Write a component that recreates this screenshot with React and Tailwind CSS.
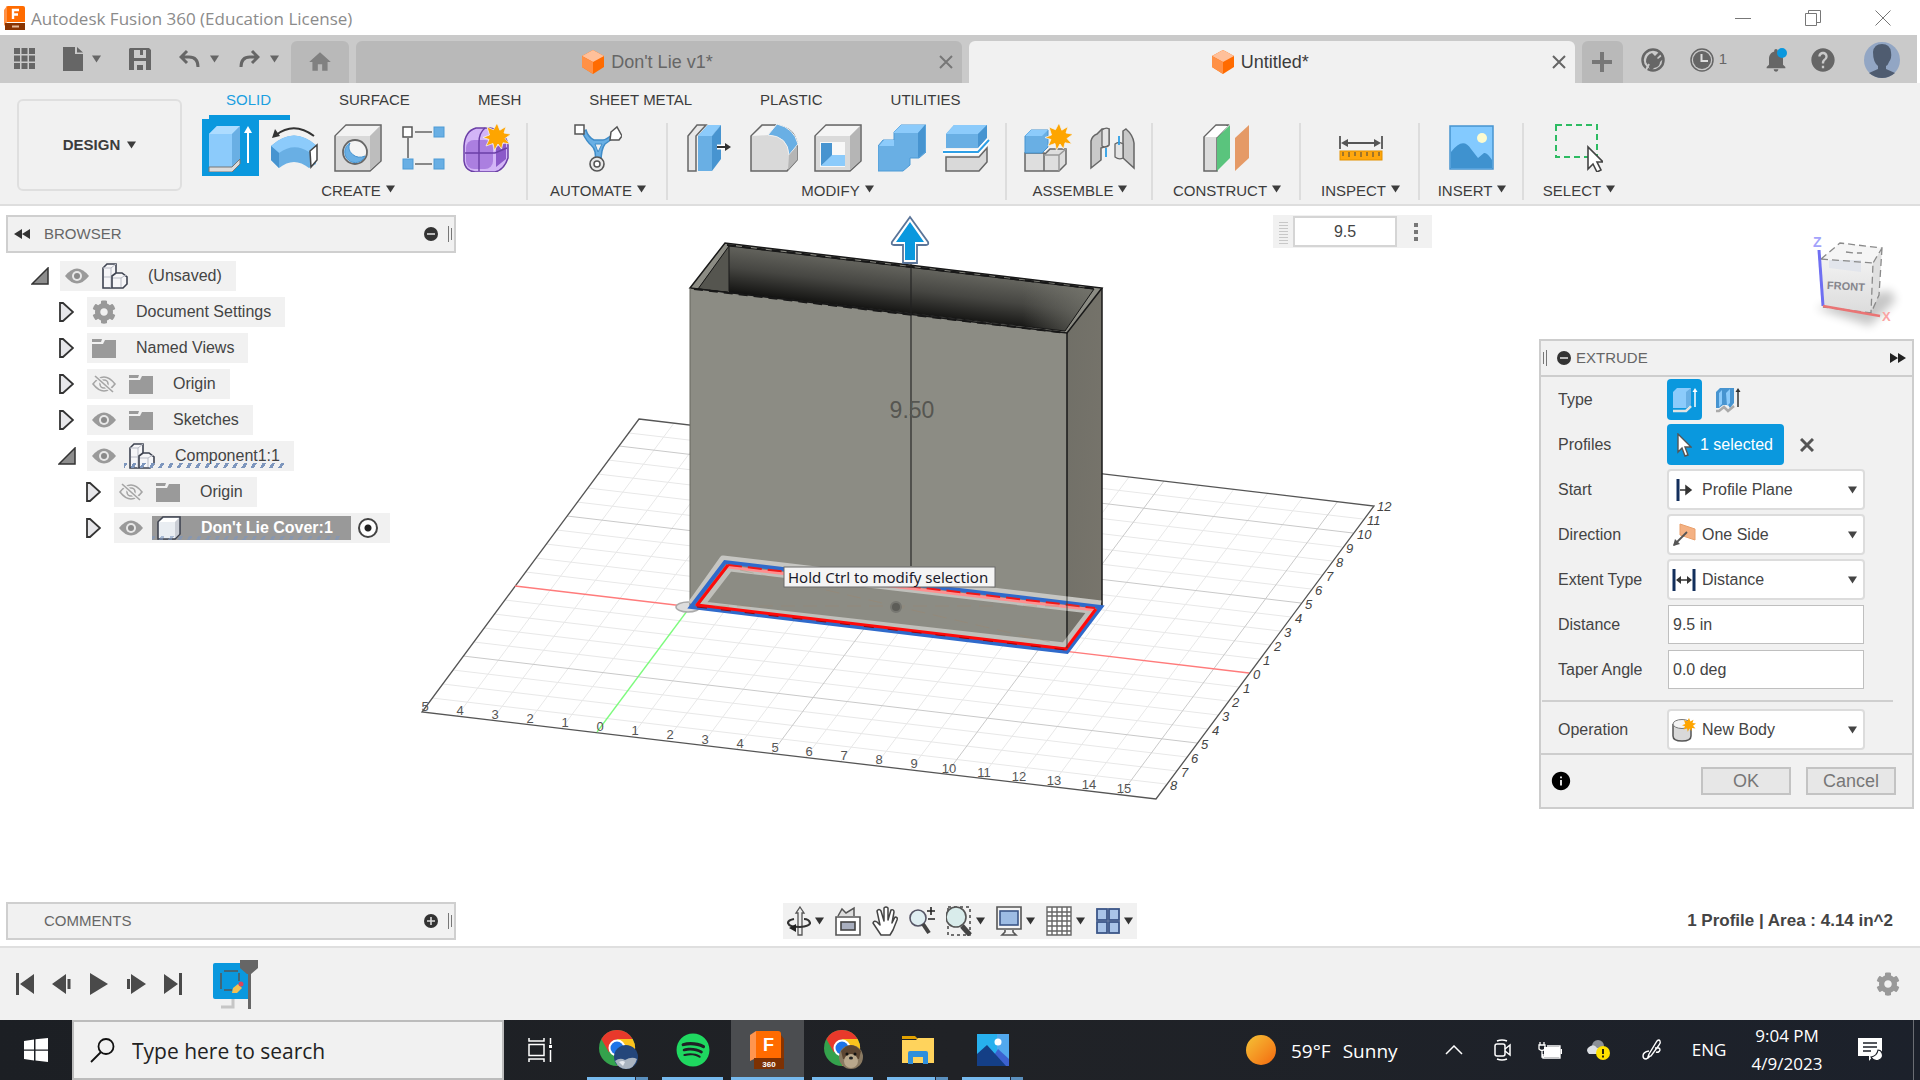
import React from "react";
import { FaCog, FaSpotify } from "react-icons/fa";
import { MdHelp, MdNotifications, MdHome, MdInfo } from "react-icons/md";

const ARIAL = "font-['Liberation_Sans',Arial,sans-serif]";
const SEGOE = "font-['Open_Sans','Noto_Sans',sans-serif]";

function Caret({ className = "" }) {
  return (
    <svg viewBox="0 0 9 8" className={`h-2 w-[9px] shrink-0 ${className}`} fill="currentColor" aria-hidden="true">
      <path d="M0 .5h9L4.500 7.500z" />
    </svg>
  );
}

function Svg({ w = 48, h = 48, children, className = "" }) {
  return (
    <svg width={w} height={h} viewBox={`0 0 ${w} ${h}`} fill="none" className={`shrink-0 ${className}`} aria-hidden="true">
      {children}
    </svg>
  );
}

const STAR = "M0-14l2.800 7.200L9-10.500 7-4l7 1.200L8 1.500l5 5.500-7-1.200L4.500 12 1 7l-3.500 6.500L-4 6.500l-7 2.500 3-6.500-6-2 6.500-2.500L-10-10l6.500 2.700z";

/* ---------- ribbon icons ---------- */

const ExtrudeIcon = () => (
  <Svg>
    <path d="M3 10l8-8h23v34l-8 7H3z" fill="#8ccbfb" />
    <path d="M3 10l8-8h23l-8 8z" fill="#addcff" />
    <path d="M26 10l8-8v34l-8 7z" fill="#69afe4" />
    <path d="M3 43h23l8-8v5l-8 8H3z" fill="#dcdcdc" stroke="#777" strokeWidth="1" />
    <path d="M42 39V8" stroke="#fff" strokeWidth="2" />
    <path d="M38 9l4-7 4 7z" fill="#fff" />
  </Svg>
);
const RevolveIcon = () => (
  <Svg>
    <path d="M1 22Q24 1 47 22l-1 18-7 4Q24 32 9 44L1 36z" fill="#69afe4" />
    <path d="M1 22Q24 1 47 22l-8 6Q24 18 9 29z" fill="#8ccbfb" />
    <path d="M1 22l8 7v15l-8-8z" fill="#4794d0" />
    <path d="M40 27l7-6v15l-6 7z" fill="#fff" stroke="#444" strokeWidth="1.500" />
    <path d="M6 11Q24-3 44 12" stroke="#333" strokeWidth="2" />
    <path d="M2 14l3-9 5 7z" fill="#333" />
  </Svg>
);
const HoleIcon = () => (
  <Svg>
    <path d="M1 12L12 1h35v36L36 47H1z" fill="#d9d9d9" stroke="#666" strokeWidth="1.500" />
    <path d="M2 12L12 2h34L36 12z" fill="#f3f3f3" />
    <path d="M36 12L46 2v35L36 46z" fill="#bdbdbd" />
    <circle cx="21" cy="28" r="12" fill="#f4f4f4" stroke="#666" strokeWidth="1.800" />
    <path d="M16 19a11 10 0 0 0 15 13 10.500 10.500 0 1 1-15-13z" fill="#69afe4" stroke="#4794d0" />
  </Svg>
);
const PatternIcon = () => (
  <Svg>
    <path d="M17 8h17M10 14v20M17 40h17" stroke="#666" strokeWidth="1.600" />
    <rect x="5" y="3" width="9" height="10" fill="#fff" stroke="#555" strokeWidth="1.500" />
    <g fill="#69afe4" stroke="#4f9bd6">
      <rect x="36" y="3" width="10" height="10" />
      <rect x="5" y="35" width="10" height="10" />
      <rect x="36" y="35" width="10" height="10" />
    </g>
  </Svg>
);
const FormIcon = () => (
  <Svg>
    <path d="M2 22Q3 7 14 4h14q14 2 18 16v14Q42 46 33 48H13Q3 47 2 37z" fill="#d3b5f7" stroke="#6b3fa6" strokeWidth="1.500" />
    <rect x="4" y="16" width="27" height="29" rx="8" fill="#ab7fe0" />
    <path d="M34 23l10-4v16l-10 8z" fill="#8b59c9" />
    <path d="M3 29h30l12-5M17 47V18q0-9 6-14" stroke="#6b3fa6" strokeWidth="1.400" />
    <path d={STAR} transform="translate(35 13)" fill="#fea500" stroke="#f1f1f1" strokeWidth=".8" />
  </Svg>
);
const AutomateIcon = () => (
  <Svg>
    <path d="M8 8q5 10 9 13 6 5 4 17h6q0-13 4-18 4-3 10-7l-2-3q-7 6-10 6h-9Q14 13 12 6z" fill="#69afe4" stroke="#3f8cc8" strokeWidth="1.500" />
    <path d="M21 20h7l-4 8z" fill="#f1f1f1" stroke="#3f8cc8" />
    <rect x="1" y="1" width="9" height="9" fill="#fff" stroke="#555" strokeWidth="1.500" />
    <path d="M37 8l6-5 5 9-3 4h-9z" fill="#fff" stroke="#555" strokeWidth="1.500" />
    <circle cx="23" cy="40" r="7" fill="#e8e8e8" stroke="#555" strokeWidth="1.600" />
    <circle cx="23" cy="40" r="3" fill="#fff" stroke="#555" strokeWidth="1.500" />
  </Svg>
);
const PressPullIcon = () => (
  <Svg>
    <path d="M2 12L11 1h9L10 12v35H2z" fill="#e8e8e8" stroke="#666" strokeWidth="1.500" />
    <path d="M12 12L22 1h13L26 12v35H12z" fill="#69afe4" />
    <path d="M12 12L22 1h13L26 12z" fill="#8ccbfb" />
    <path d="M26 12l9-11v34l-9 12z" fill="#4794d0" />
    <path d="M31 23h10" stroke="#fff" strokeWidth="5" />
    <path d="M31 23h10" stroke="#333" strokeWidth="2" />
    <path d="M39 19l6 4-6 4z" fill="#333" />
  </Svg>
);
const FilletIcon = () => (
  <Svg>
    <path d="M1 12L12 1h14Q45 4 47 20v16L37 47H1z" fill="#d9d9d9" stroke="#666" strokeWidth="1.500" />
    <path d="M2 12L13 2h13l-8 9z" fill="#f5f5f5" />
    <path d="M18 11l9-11Q44 4 48 20l-9 11Q38 12 18 11z" fill="#69afe4" stroke="#f1f1f1" />
    <path d="M39 31l8-9v14l-9 10z" fill="#b5b5b5" />
  </Svg>
);
const ShellIcon = () => (
  <Svg>
    <path d="M1 12L12 1h35v36L36 47H1z" fill="#dadada" stroke="#666" strokeWidth="1.500" />
    <path d="M2 12L12 2h34L36 12z" fill="#f5f5f5" />
    <path d="M36 12L46 2v35L36 46z" fill="#b5b5b5" />
    <rect x="6" y="18" width="25" height="25" fill="#f8f8f8" />
    <path d="M7 19h11v13L7 42z" fill="#4794d0" />
    <path d="M18 31h13v11H7z" fill="#8ccbfb" />
  </Svg>
);
const CombineIcon = () => (
  <Svg>
    <path d="M0 22l5-6h11V8l7-7h25v27l-7 6h-9v7l-7 6H0z" fill="#69afe4" stroke="#4f9bd6" />
    <path d="M16 8l7-7h24l-7 8H16zM1 22l5-6h10v6z" fill="#8ccbfb" />
    <path d="M40 9l7-8v27l-7 6z" fill="#4794d0" />
  </Svg>
);
const SplitIcon = () => (
  <Svg>
    <path d="M4 10l8-9h33v12L36 24H4z" fill="#69afe4" />
    <path d="M4 10l8-9h33l-9 9z" fill="#8ccbfb" />
    <path d="M36 10l9-9v13l-9 10z" fill="#4794d0" />
    <path d="M1 28h35l11-12" stroke="#fff" strokeWidth="5" />
    <path d="M1 28h35l11-12" stroke="#2e9fe6" strokeWidth="2" />
    <path d="M4 33h33l8-9v14l-8 9H4z" fill="#d9d9d9" stroke="#666" strokeWidth="1.500" />
  </Svg>
);
const NewComponentIcon = () => (
  <Svg>
    <path d="M1 29h19v18H1zM20 31l6-6h16v15l-7 7H20z" fill="#dedede" stroke="#666" strokeWidth="1.500" />
    <path d="M20 31h15l7-6M35 31v16" stroke="#999" strokeWidth="1.500" />
    <path d="M1 12l6-6h17v17l-6 6H1z" fill="#69afe4" stroke="#4794d0" />
    <path d="M1 12l6-6h17l-6 6z" fill="#8ccbfb" />
    <path d={STAR} transform="translate(35 13)" fill="#fea500" stroke="#f1f1f1" strokeWidth=".8" />
  </Svg>
);
const JointIcon = () => (
  <Svg>
    <path d="M3 17q1-5 6-7l5-5h7v15q0 3-5 3l-3 1v12L3 44z" fill="#c9c9c9" stroke="#666" strokeWidth="1.500" />
    <path d="M14 6v16q3 2 7-1V5q-3-2-7 1z" fill="#e4e4e4" stroke="#666" strokeWidth="1.300" />
    <path d="M35 7l3-2q7 6 8 14v25l-11-10z" fill="#c9c9c9" stroke="#666" strokeWidth="1.500" />
    <path d="M27 20v13q4 3 8 1V20q-4-3-8 0z" fill="#e4e4e4" stroke="#666" strokeWidth="1.300" />
    <path d="M18 24v9M31 12v9" stroke="#2e9fe6" strokeWidth="1.800" />
  </Svg>
);
const PlaneIcon = () => (
  <Svg>
    <path d="M1 13L13 1h12L14 14v33H1z" fill="#dcdcdc" stroke="#666" strokeWidth="1.500" />
    <path d="M2 13L13 2h12L14 13z" fill="#fff" />
    <path d="M14 14L27 1v33L14 47z" fill="#5ac47d" />
    <path d="M32 14L46 1v33L32 47z" fill="#e59a66" />
  </Svg>
);
const MeasureIcon = () => (
  <Svg>
    <path d="M3 12v13M45 12v13M6 19h36" stroke="#555" strokeWidth="1.800" />
    <path d="M4 19l7-4v8zM44 19l-7-4v8z" fill="#555" />
    <rect x="3" y="27" width="42" height="9" fill="#ffa70d" stroke="#e39100" />
    <path d="M6 28v4M12 28v5M18 28v4M24 28v5M30 28v4M36 28v5M42 28v4" stroke="#444" />
  </Svg>
);
const CanvasIcon = () => (
  <Svg>
    <rect x="2" y="2" width="43" height="43" fill="#83caff" stroke="#4794d0" strokeWidth="1.500" />
    <circle cx="34" cy="14" r="5" fill="#fbfbd0" />
    <path d="M3 28q12-16 20-3l7 9 6-5q3-1 8 7v8H3z" fill="#3f92cf" />
  </Svg>
);
const SelectIcon = () => (
  <Svg>
    <rect x="1" y="1" width="41" height="32" stroke="#2dbb62" strokeWidth="2" strokeDasharray="6 4" />
    <path d="M33 23v22l5-5 4 8 4-2-4-8h6z" fill="#fff" stroke="#444" strokeWidth="1.600" />
  </Svg>
);

/* ---------- title and tab bar ---------- */

function FusionMark() {
  return (
    <svg width="22" height="24" viewBox="0 0 22 24" aria-hidden="true">
      <path d="M2 2q0-2 2-2h15q2 0 2 2v14H2z" fill="#ff6b00" />
      <path d="M0 4l3-4v16L0 20z" fill="#ff9146" />
      <path d="M1 17h20v7H1z" fill="#8a3400" />
      <path d="M9 13V4h6M9 8.500h5" stroke="#fff" strokeWidth="2.400" fill="none" />
      <path d="M8 20.500h7" stroke="#e5b999" strokeWidth="2" />
    </svg>
  );
}

function Cube() {
  return (
    <svg width="22" height="24" viewBox="0 0 22 24" className="shrink-0" aria-hidden="true">
      <path d="M11 0l11 6v11l-11 7L0 17V6z" fill="#ff6b00" />
      <path d="M11 0l11 6-11 6L0 6z" fill="#ffc09a" />
      <path d="M0 6l11 6v12L0 17z" fill="#ff9146" />
    </svg>
  );
}

function Tab({ title, active }) {
  return (
    <div
      className={`flex h-full min-w-0 flex-1 items-center rounded-t-md pr-[9px] ${
        active ? "bg-[#f1f1f1] text-[#3c3c3c]" : "bg-[#b9b9b9] text-[#666]"
      }`}
    >
      <button className="flex h-full min-w-0 flex-1 items-center justify-center gap-[7px] text-[18px]">
        <Cube />
        <span className="truncate">{title}</span>
      </button>
      <button aria-label={`Close ${title}`} className={active ? "text-[#666]" : "text-[#777]"}>
        <Svg w={14} h={14}>
          <path d="M1 1l12 12M13 1L1 13" stroke="currentColor" strokeWidth="2" />
        </Svg>
      </button>
    </div>
  );
}

function TitleBar() {
  return (
    <header className={`flex h-[35px] shrink-0 items-center bg-white pl-1 text-[#8b8b8b] ${SEGOE}`}>
      <FusionMark />
      <h1 className="ml-[5px] mt-[2px] text-[17px] leading-5">Autodesk Fusion 360 (Education License)</h1>
      <div className="ml-auto flex pr-[29px] text-[#777]">
        <button aria-label="Minimize" className="mr-[54px]">
          <Svg w={16} h={16}><path d="M0 8.500h16" stroke="currentColor" /></Svg>
        </button>
        <button aria-label="Restore" className="mr-[54px]">
          <Svg w={16} h={16}><path d="M.5 3.500h11v12H.5zM3.500 3V.5h12v12H12" stroke="currentColor" /></Svg>
        </button>
        <button aria-label="Close">
          <Svg w={16} h={16}><path d="M.5.5l15 15M15.500.5l-15 15" stroke="currentColor" /></Svg>
        </button>
      </div>
    </header>
  );
}

function TabBar() {
  return (
    <div className="mr-[3px] flex h-12 shrink-0 bg-[#cacaca] pt-[6px] text-[#666]">
      <div className="flex w-[291px] shrink-0 items-center pb-[7px] pl-[14px]">
        <button aria-label="Data panel" className="mr-7">
          <Svg w={21} h={21}>
            <path fill="currentColor" d="M0 0h6v6H0zM7.500 0h6v6h-6zM15 0h6v6h-6zM0 7.500h6v6H0zM7.500 7.500h6v6h-6zM15 7.500h6v6h-6zM0 15h6v6H0zM7.500 15h6v6h-6zM15 15h6v6h-6z" />
          </Svg>
        </button>
        <button aria-label="File" className="mr-7 flex items-center gap-[9px]">
          <Svg w={20} h={24}><path fill="currentColor" d="M0 0h12v7h8v17H0zM14 0l6 5.500h-6z" /></Svg>
          <Caret />
        </button>
        <button aria-label="Save" className="mr-7">
          <Svg w={22} h={22}>
            <path fill="currentColor" fillRule="evenodd" d="M1 0h19l2 2v20H0V1zM5 2v8h12V2h-3v5h-3V2zM5 13v9h3v-5h6v5h3v-9z" />
          </Svg>
        </button>
        <button aria-label="Undo" className="mr-5 flex items-center gap-[10px]">
          <Svg w={21} h={20}>
            <path d="M8 2L2 8l6 6M3 8h7q9 0 9 10" stroke="currentColor" strokeWidth="3" />
          </Svg>
          <Caret />
        </button>
        <button aria-label="Redo" className="flex items-center gap-[10px]">
          <Svg w={21} h={20}>
            <path d="M13 2l6 6-6 6M18 8h-7Q2 8 2 18" stroke="currentColor" strokeWidth="3" />
          </Svg>
          <Caret />
        </button>
      </div>
      <button aria-label="Home" className="mr-[7px] flex h-full w-[58px] shrink-0 items-center justify-center rounded-t-md bg-[#b9b9b9] text-[#808080]">
        <MdHome size={26} />
      </button>
      <div className="flex min-w-0 flex-1 gap-[7px]">
        <Tab title="Don't Lie v1*" />
        <Tab title="Untitled*" active />
      </div>
      <button aria-label="New design" className="ml-[7px] flex h-full w-[41px] shrink-0 items-center justify-center rounded-t-md bg-[#b9b9b9] text-[#777]">
        <Svg w={20} h={20}><path d="M10 0v20M0 10h20" stroke="currentColor" strokeWidth="4" /></Svg>
      </button>
      <div className="flex shrink-0 items-center pb-[5px] pl-[18px] pr-[17px]">
        <button aria-label="Extensions" className="mr-[25px]">
          <Svg w={24} h={24}>
            <circle cx="12" cy="12" r="10.500" stroke="currentColor" strokeWidth="2.500" />
            <path d="M5 14q0-7 6-9l3 3 4-4 2 2-4 4 1 1 4-3 2 2-4 4q0 5-6 6l-3 3z" fill="currentColor" />
            <path d="M5 22l3-6" stroke="#cacaca" strokeWidth="2" />
          </Svg>
        </button>
        <button aria-label="Job status" className="mr-[35px] flex items-center gap-[5px] text-[15px]">
          <Svg w={24} h={24}>
            <circle cx="12" cy="12" r="11" stroke="currentColor" strokeWidth="1.500" />
            <circle cx="12" cy="12" r="9" fill="currentColor" />
            <path d="M11.500 6v7H18" stroke="#ddd" strokeWidth="2" />
          </Svg>
          1
        </button>
        <button aria-label="Notifications" className="relative mr-[23px]">
          <MdNotifications size={28} />
          <span className="absolute right-[3px] top-[2px] h-[10px] w-[10px] rounded-full bg-[#0a98de]" />
        </button>
        <button aria-label="Help" className="mr-[31px]">
          <MdHelp size={28} className="-mr-1 -ml-1" />
        </button>
        <button aria-label="Account">
          <Svg w={36} h={36}>
            <circle cx="18" cy="18" r="18" fill="#92a6c4" />
            <path d="M9 10q1-8 9-8t9 8q1 6-2 10-1 3-3 4v3l9 4q-6 5-13 5T5 31l9-4v-3q-5-4-5-14z" fill="#4f5c70" />
          </Svg>
        </button>
      </div>
    </div>
  );
}

/* ---------- ribbon ---------- */

const WORKSPACE_TABS = ["SOLID", "SURFACE", "MESH", "SHEET METAL", "PLASTIC", "UTILITIES"];

const GROUPS = [
  { label: "CREATE", width: "w-[340px]", tools: [["Extrude", ExtrudeIcon, true], ["Revolve", RevolveIcon], ["Hole", HoleIcon], ["Pattern", PatternIcon], ["Create form", FormIcon]] },
  { label: "AUTOMATE", width: "w-[140px]", tools: [["Automated modeling", AutomateIcon]] },
  { label: "MODIFY", width: "w-[339px]", tools: [["Press pull", PressPullIcon], ["Fillet", FilletIcon], ["Shell", ShellIcon], ["Combine", CombineIcon], ["Split body", SplitIcon]] },
  { label: "ASSEMBLE", width: "w-[146px]", tools: [["New component", NewComponentIcon], ["Joint", JointIcon]] },
  { label: "CONSTRUCT", width: "w-[148px]", tools: [["Offset plane", PlaneIcon]] },
  { label: "INSPECT", width: "w-[119px]", tools: [["Measure", MeasureIcon]] },
  { label: "INSERT", width: "w-[104px]", tools: [["Canvas", CanvasIcon]] },
  { label: "SELECT", width: "w-[110px]", tools: [["Select", SelectIcon]] },
];

function Ribbon() {
  return (
    <div className="flex h-[123px] shrink-0 border-b-2 border-[#dedede] bg-[#f1f1f1] pl-[17px] text-[15px] text-[#3c3c3c]">
      <button className="mr-[6px] mt-4 flex h-[92px] w-[165px] shrink-0 items-center justify-center gap-[7px] rounded-md border-2 border-[#dfdfdf] font-bold">
        DESIGN <Caret />
      </button>
      <div className="min-w-0">
        <nav className="flex h-9 items-center pl-[4px]">
          {WORKSPACE_TABS.map((t, i) => (
            <button key={t} className={`relative h-full whitespace-nowrap px-[34px] pb-[2px] ${i === 0 ? "text-[#1b9fe0]" : ""}`}>
              {t}
              {i === 0 && <span className="absolute -bottom-[1px] left-[17px] h-[5px] w-[81px] bg-[#0a98de]" />}
            </button>
          ))}
        </nav>
        <div className="flex">
          {GROUPS.map((g, i) => (
            <section key={g.label} className={`relative flex shrink-0 flex-col items-center ${g.width}`}>
              <div className="flex gap-[7px]">
                {g.tools.map(([name, Icon, on]) => (
                  <button key={name} aria-label={name} className={`flex h-[57px] w-[57px] items-center justify-center ${on ? "bg-[#0a98de]" : ""}`}>
                    <Icon />
                  </button>
                ))}
              </div>
              <button className="mt-[5px] flex items-center gap-[5px] leading-5">
                {g.label} <Caret className="-mt-1" />
              </button>
              {i < GROUPS.length - 1 && <span className="absolute right-0 top-1 h-[77px] w-[2px] bg-[#dddddd]" />}
            </section>
          ))}
        </div>
      </div>
    </div>
  );
}

/* ---------- 3D scene ---------- */

const pt = (x, y) => [
  Math.round(422 + (x + 5) * 34.95 + (y + 9) * 10.35),
  Math.round(711.5 + (x + 5) * 4.14 - (y + 9) * 13.95),
];
const seg = (a, b) => `M${a[0]} ${a[1]}L${b[0]} ${b[1]}`;
const range = (a, b) => Array.from({ length: b - a + 1 }, (_, i) => a + i);

function Scene() {
  const xs = range(-4, 15);
  const ys = range(-8, 11);
  const minor = xs.filter((x) => x % 5).map((x) => seg(pt(x, -9), pt(x, 12))).join("") + ys.filter((y) => y % 5).map((y) => seg(pt(-5, y), pt(16, y))).join("");
  const major = [5, 10, 15].map((x) => seg(pt(x, -9), pt(x, 12))).join("") + [-5, 5, 10].map((y) => seg(pt(-5, y), pt(16, y))).join("");
  return (
    <svg viewBox="0 206 1920 740" className="absolute inset-0 h-full w-full" role="img" aria-label="Model view">
      <defs>
        <linearGradient id="inside" gradientUnits="userSpaceOnUse" x1="915" y1="262" x2="908" y2="318">
          <stop offset="0" stopColor="#6c6c65" />
          <stop offset=".5" stopColor="#464642" />
          <stop offset="1" stopColor="#0c0c0b" />
        </linearGradient>
        <linearGradient id="insideEnd" x1="0" y1="0" x2="1" y2="0">
          <stop offset=".82" stopColor="#77776f" stopOpacity="0" />
          <stop offset="1" stopColor="#77776f" stopOpacity=".75" />
        </linearGradient>
        <linearGradient id="side" x1="0" y1="0" x2="1" y2="1">
          <stop offset="0" stopColor="#706f67" />
          <stop offset="1" stopColor="#78756c" />
        </linearGradient>
        <linearGradient id="cubeFront" x1="0" y1="0" x2="0" y2="1">
          <stop offset="0" stopColor="#f2f2f2" />
          <stop offset="1" stopColor="#dcdcdc" />
        </linearGradient>
        <filter id="soft" x="-30%" y="-50%" width="160%" height="200%">
          <feGaussianBlur stdDeviation="5" />
        </filter>
      </defs>

      <g fill="none">
        <path d={minor} stroke="#e8e8e8" />
        <path d={major} stroke="#c9c9c9" />
        <path d="M639 419L1374 506 1156 799 422 712z" stroke="#555" strokeWidth="1.300" />
        <path d={seg(pt(-5, 0), pt(16, 0))} stroke="#ff7b7b" strokeWidth="1.300" />
        <path d={seg(pt(0, 0), pt(0, -9))} stroke="#7dfb7d" strokeWidth="1.300" />
      </g>

      <g fill="#555" fontSize="13" fontFamily="Liberation Sans" textAnchor="middle">
        {range(-5, 15).map((x) => {
          const [px, py] = pt(x, -9);
          return (
            <text key={x} x={px + 3} y={py - 1}>
              {Math.abs(x)}
            </text>
          );
        })}
      </g>
      <g fill="#444" fontSize="13" fontStyle="italic" fontFamily="Liberation Sans">
        {range(-8, 12).map((y) => {
          const [px, py] = pt(16, y);
          return (
            <text key={y} x={px + 4} y={py + 6}>
              {Math.abs(y)}
            </text>
          );
        })}
      </g>

      <ellipse cx="688" cy="607" rx="12" ry="5" fill="#ddd" stroke="#aaa" strokeWidth="1.500" />

      <path d="M690 288L1067 333V652L690 606z" fill="#8c8c84" />
      <path d="M1067 333L1102 288V606L1067 652z" fill="url(#side)" />
      <path d="M690 288L725 243 1102 288 1067 333z" fill="#8c8c84" />
      <path d="M698 289L729 246 1094 289 1065 331z" fill="url(#inside)" />
      <path d="M698 289L729 246 1094 289 1065 331z" fill="url(#insideEnd)" />
      <path d="M698 289L729 246V292z" fill="#55554f" />
      <g fill="none" stroke="#181818">
        <path d="M690 288L725 243 1102 288 1067 333z" strokeWidth="1.500" />
        <path d="M698 289L729 246 1094 289 1065 331z" />
        <path d="M694 289L1066 333M727 245L1098 289" strokeWidth="2" strokeDasharray="9 6" />
        <path d="M729 246V291" />
        <path d="M690 288V606" stroke="#66665f" />
        <path d="M1067 333V652" strokeWidth="1.500" />
        <path d="M1102 288V606" strokeWidth="1.500" />
      </g>

      <g fill="none" strokeLinejoin="round">
        <path d="M691 604L723 559 1101 604" stroke="#c6c6c2" strokeWidth="7" />
        <path d="M703 604L730 569 1090 611 1064 645z" stroke="#c0c0bb" strokeWidth="5" />
        <path d="M691 607L725 562 1101 607 1067 652z" stroke="#2f6acb" strokeWidth="4" strokeLinejoin="miter" />
        <path d="M728 567L1095 610 1066 648" stroke="#ff8f8f" strokeWidth="3" />
        <path d="M728 565L697 605 1066 649 1096 609" stroke="#ff0a0a" strokeWidth="3" />
        <path d="M728 565L1095 608" stroke="#f01818" strokeWidth="2" strokeDasharray="14 6" />
        <path d="M697 607L1066 650" stroke="#a80000" strokeDasharray="10 14" />
        <path d="M1067 570V648" stroke="#3c3c38" />
        <path d="M740 570L1050 642M715 606H1080" stroke="#a08468" strokeOpacity=".35" strokeDasharray="14 8" />
      </g>
      <circle cx="896" cy="607" r="5" fill="#5d5d58" stroke="#777771" strokeWidth="2" />

      <path d="M911 264V566" stroke="#222" strokeWidth="1.300" strokeOpacity=".85" />
      <text x="912" y="418" fontSize="23" fill="#565651" textAnchor="middle" fontFamily="Liberation Sans">9.50</text>
      <path d="M910 217L928 242Q929 245 926 245H917V263H903V245H894Q891 245 892 242z" fill="#fff" stroke="#5b7599" strokeWidth="1.800" />
      <path d="M910 222L924 242H915V260H905V242H896z" fill="#0a98de" />

      <rect x="784" y="567" width="211" height="20" fill="#f4f4f4" stroke="#6b6b6b" />
      <text x="788" y="583" fontSize="15" fill="#1a1a2a" fontFamily="Noto Sans">Hold Ctrl to modify selection</text>

      <path d="M1816 308L1890 290 1896 300 1870 326z" fill="#000" opacity=".22" filter="url(#soft)" />
      <path d="M1821 259L1873 263 1871 313 1823 307z" fill="url(#cubeFront)" />
      <path d="M1821 259L1840 243 1882 248 1873 263z" fill="#f5f5f5" />
      <path d="M1873 263L1882 248 1879 295 1871 313z" fill="#e0e0e0" />
      <path d="M1829 260h32v12l-32-4z" fill="#e2e5ec" />
      <path d="M1821 259L1873 263 1871 313M1821 259L1840 243 1882 248 1873 263M1882 248L1879 295 1871 313 1823 307M1846 252l8 1 8 0" fill="none" stroke="#8a8a8a" strokeDasharray="7 4" strokeWidth="1.300" />
      <text x="1846" y="290" fontSize="11" fill="#85858c" textAnchor="middle" fontFamily="Liberation Sans" fontWeight="bold" transform="rotate(3 1846 286)">FRONT</text>
      <path d="M1819 250L1823 306" stroke="#6f6ff2" strokeWidth="3" />
      <path d="M1823 306L1880 316" stroke="#ea7474" strokeWidth="2.500" />
      <text x="1813" y="247" fontSize="14" fontFamily="Liberation Sans" fontWeight="bold" fill="#a3a3fb">Z</text>
      <text x="1882" y="321" fontSize="13" fontFamily="Liberation Sans" fontWeight="bold" fill="#fba3a3">X</text>
    </svg>
  );
}

/* ---------- browser panel ---------- */

const Eye = () => (
  <Svg w={24} h={16}>
    <path d="M0 8Q12-7 24 8 12 23 0 8z" fill="#9a9a9a" />
    <circle cx="12" cy="8" r="5" fill="#e8e8e8" />
    <circle cx="12" cy="8" r="3" fill="#8a8a8a" />
  </Svg>
);
const EyeOff = () => (
  <Svg w={24} h={18}>
    <path d="M1 9Q12-5 23 9 12 23 1 9z" stroke="#a5a5a5" strokeWidth="1.600" />
    <circle cx="12" cy="9" r="4" stroke="#a5a5a5" strokeWidth="1.600" />
    <path d="M3 1l18 16" stroke="#f1f1f1" strokeWidth="4" />
    <path d="M3 1l18 16" stroke="#a5a5a5" strokeWidth="1.600" />
  </Svg>
);
const Folder = () => (
  <Svg w={24} h={20}><path d="M0 6h11l2-4h11v18H0zM0 1h10l-1 3H0z" fill="#9a9a9a" /></Svg>
);
const Gear = () => <FaCog size={24} color="#999" className="shrink-0" />;
const Component = () => (
  <Svg w={26} h={26}>
    <path d="M1 5l4-4h9v9h6l5 4v7l-4 4H1z" fill="#f6f6f8" stroke="#3e4350" strokeWidth="1.600" />
    <path d="M1 5h8l5-4M9 5v20M10 15h9l5-3M19 15v9M2 14h7" stroke="#b9bcc6" />
    <path d="M10 25V13l4-3" stroke="#3e4350" strokeWidth="1.600" />
  </Svg>
);
const Body = () => (
  <Svg w={24} h={24}>
    <path d="M1 6l5-5h17v17l-5 5H1z" fill="#e9edf2" stroke="#3e4350" strokeWidth="1.600" />
    <path d="M2 6l5-4h15l-4 4z" fill="#fff" />
    <path d="M18 6l4-4v16l-4 4z" fill="#c9cdd5" />
  </Svg>
);
const ICONS = { eye: Eye, off: EyeOff, folder: Folder, gear: Gear, component: Component };

function Toggle({ open, label }) {
  return (
    <button aria-label={label} className="flex w-[17px] shrink-0 justify-center">
      {open ? (
        <Svg w={18} h={18}><path d="M1 17L17 1v16z" fill="#8d8d8d" stroke="#333" strokeWidth="1.500" /></Svg>
      ) : (
        <Svg w={15} h={20}><path d="M1 1h3l10 9-10 9H1z" fill="#e7e7ea" stroke="#333" strokeWidth="1.800" /></Svg>
      )}
    </button>
  );
}

const HATCH = "bg-[repeating-linear-gradient(120deg,#7d96bd_0_3px,transparent_3px_8px)]";

const ROWS = [
  { indent: "pl-[31px]", gap: "ml-[12px]", open: true, icons: ["eye", "component"], text: "(Unsaved)" },
  { indent: "pl-[58px]", gap: "ml-[12px]", icons: ["gear"], text: "Document Settings" },
  { indent: "pl-[58px]", gap: "ml-[12px]", icons: ["folder"], text: "Named Views" },
  { indent: "pl-[58px]", gap: "ml-[12px]", icons: ["off", "folder"], text: "Origin" },
  { indent: "pl-[58px]", gap: "ml-[12px]", icons: ["eye", "folder"], text: "Sketches" },
  { indent: "pl-[58px]", gap: "ml-[12px]", open: true, icons: ["eye", "component"], text: "Component1:1", hatch: true },
  { indent: "pl-[85px]", gap: "ml-[12px]", icons: ["off", "folder"], text: "Origin" },
];

function PanelHeader({ title, collapse, plus }) {
  return (
    <div className="flex h-[38px] items-center border-2 border-[#cfcfcf] bg-[#f1f1f1] text-[15px] text-[#666]">
      <span className="flex w-[36px] shrink-0 pl-[6px]">
        {collapse && (
          <button aria-label={`Collapse ${title}`}>
            <Svg w={16} h={10}><path d="M8 0v10L0 5zM16 0v10L8 5z" fill="#333" /></Svg>
          </button>
        )}
      </span>
      <h2 className="flex-1">{title}</h2>
      <button aria-label={plus ? `Add to ${title}` : `Minimize ${title}`} className="mr-[10px]">
        <Svg w={14} h={14}>
          <circle cx="7" cy="7" r="7" fill="#333" />
          <path d={plus ? "M3 7h8M7 3v8" : "M3 7h8"} stroke="#ddd" strokeWidth="1.600" />
        </Svg>
      </button>
      <span className="mr-[2px] flex items-center gap-[2px]">
        <span className="h-4 w-px bg-[#777]" />
        <span className="h-3 w-px bg-[#777]" />
      </span>
    </div>
  );
}

function Browser() {
  return (
    <aside className="flex w-[450px] shrink-0 flex-col">
      <PanelHeader title="BROWSER" collapse />
      <ul className="-ml-[6px] mt-[8px] flex flex-col gap-[6px] text-[16px] text-[#444]">
        {ROWS.map((r, i) => (
          <li key={i} className={`flex items-center ${r.indent}`}>
            <Toggle open={r.open} label={r.text} />
            <div className={`relative flex h-[30px] items-center gap-[13px] bg-[#f1f1f1] pl-[5px] pr-[14px] ${r.gap}`}>
              {r.icons.map((k) => {
                const I = ICONS[k];
                return <I key={k} />;
              })}
              <span className="ml-[7px]">{r.text}</span>
              {r.hatch && <span className={`absolute bottom-[3px] left-[37px] right-[6px] h-[5px] ${HATCH}`} />}
            </div>
          </li>
        ))}
        <li className="flex items-center pl-[85px]">
          <Toggle label="Don't Lie Cover:1" />
          <div className="ml-[12px] flex h-[30px] items-center bg-[#f1f1f1] pl-[5px] pr-[12px]">
            <Eye />
            <button className="relative ml-[9px] flex h-6 items-center gap-[20px] bg-[#999] pl-[5px] pr-[18px] font-bold text-white">
              <Body />
              Don't Lie Cover:1
              <span className={`absolute bottom-0 left-0 right-2 h-1 opacity-60 ${HATCH}`} />
            </button>
            <input
              type="radio"
              aria-label="Activate component"
              defaultChecked
              className="m-0 ml-[7px] h-[20px] w-[20px] appearance-none rounded-full border-2 border-[#444] bg-[radial-gradient(#222_0_3px,#fff_4px)]"
            />
          </div>
        </li>
      </ul>
    </aside>
  );
}

/* ---------- extrude dialog ---------- */

const StartIcon = () => (
  <Svg w={24} h={24}>
    <path d="M6 1v22" stroke="#132f5c" strokeWidth="3" />
    <path d="M8 12h9M14 8l5 4-5 4z" stroke="#333" strokeWidth="1.500" fill="#333" />
  </Svg>
);
const SideIcon = () => (
  <Svg w={24} h={24}>
    <path d="M8 1l15 5v11L8 12z" fill="#f4b183" stroke="#e9a06c" />
    <path d="M15 9L2 22" stroke="#555" strokeWidth="1.800" />
    <path d="M1 23l2-7 5 5z" fill="#555" />
  </Svg>
);
const DistanceIcon = () => (
  <Svg w={24} h={24}>
    <path d="M2 1v22M22 1v22" stroke="#132f5c" strokeWidth="3" />
    <path d="M5 12h14" stroke="#333" strokeWidth="1.500" />
    <path d="M4 12l5-4v8zM20 12l-5-4v8z" fill="#333" />
  </Svg>
);
const BodyNewIcon = () => (
  <Svg w={24} h={24}>
    <path d="M1 6v12q0 5 9 5t9-5V6" fill="#d9d9d9" stroke="#555" strokeWidth="1.500" />
    <ellipse cx="10" cy="6" rx="9" ry="4.500" fill="#f4f4f4" stroke="#777" />
    <path d={STAR} transform="translate(17 7) scale(.5)" fill="#fea500" />
  </Svg>
);

function Row({ label, id, children }) {
  return (
    <div className="grid h-[45px] grid-cols-[109px_1fr] items-center">
      <label htmlFor={id}>{label}</label>
      <div className="flex items-center">{children}</div>
    </div>
  );
}

function Drop({ id, value, Icon }) {
  return (
    <div className="relative flex h-[41px] w-[198px] items-center rounded-sm border-2 border-[#dcdcdc] bg-white">
      <span className="absolute left-[3px]"><Icon /></span>
      <select id={id} defaultValue={value} className="h-full w-full appearance-none bg-transparent pl-[33px] pr-5 outline-none">
        <option>{value}</option>
      </select>
      <Caret className="pointer-events-none absolute right-[6px]" />
    </div>
  );
}

function Field({ id, value }) {
  return <input id={id} defaultValue={value} className="mx-px h-[39px] w-[196px] border border-[#bfbfbf] bg-white px-1 outline-none" />;
}

function ExtrudePanel() {
  return (
    <section className="w-[375px] shrink-0 border-2 border-[#cdcdcd] bg-[#f1f1f1] text-[16px] text-[#444]">
      <header className="flex h-[36px] items-center border-b-2 border-[#cdcdcd] pl-[2px] pr-[6px]">
        <span className="flex items-center gap-[2px]">
          <span className="h-3 w-px bg-[#777]" />
          <span className="h-4 w-px bg-[#777]" />
        </span>
        <button aria-label="Minimize dialog" className="ml-[10px]">
          <Svg w={14} h={14}><circle cx="7" cy="7" r="7" fill="#333" /><path d="M3 7h8" stroke="#ddd" strokeWidth="1.600" /></Svg>
        </button>
        <h2 className="ml-[5px] flex-1 text-[15px] text-[#666]">EXTRUDE</h2>
        <button aria-label="Dock dialog">
          <Svg w={16} h={10}><path d="M0 0v10l8-5zM8 0v10l8-5z" fill="#222" /></Svg>
        </button>
      </header>
      <div className="pl-[17px]">
        <Row label="Type" id="type">
          <button id="type" aria-label="Extrude" className="flex h-[41px] w-[35px] items-center justify-center rounded-sm bg-[#0a98de]">
            <Svg w={26} h={26}>
              <path d="M1 5l4-4h14v16l-5 4H1z" fill="#8ccbfb" />
              <path d="M14 5l5-4v16l-5 4z" fill="#69afe4" />
              <path d="M1 24h13l5-5" stroke="#e3e3e3" strokeWidth="2.500" />
              <path d="M23 20V4" stroke="#fff" strokeWidth="1.500" />
              <path d="M20.500 5L23 1l2.500 4z" fill="#fff" />
            </Svg>
          </button>
          <button aria-label="Thin extrude" className="ml-[13px]">
            <Svg w={26} h={26}>
              <path d="M1 5l4-4h14v15l-4 5-2-3H8l-4 3H1z" fill="#4794d0" />
              <path d="M4 6l3-3v14l-3 3zM11 6l4-4v14l-3 3z" fill="#8ccbfb" />
              <path d="M1 24h3l5-4 4 4 6-5" stroke="#aaa" strokeWidth="2.500" />
              <path d="M23 20V4" stroke="#333" strokeWidth="1.500" />
              <path d="M20.500 5L23 1l2.500 4z" fill="#333" />
            </Svg>
          </button>
        </Row>
        <Row label="Profiles" id="profiles">
          <button id="profiles" className="flex h-[41px] w-[117px] items-center gap-[8px] rounded-sm bg-[#0a98de] pl-[10px] text-white">
            <Svg w={15} h={24}><path d="M1 1v18l4-4 3 8 3-1-3-8h6z" fill="#fff" stroke="#555" strokeWidth="1.400" /></Svg>
            1 selected
          </button>
          <button aria-label="Clear profiles" className="ml-[16px]">
            <Svg w={14} h={14}><path d="M1 1l12 12M13 1L1 13" stroke="#555" strokeWidth="3" /></Svg>
          </button>
        </Row>
        <Row label="Start" id="start"><Drop id="start" value="Profile Plane" Icon={StartIcon} /></Row>
        <Row label="Direction" id="direction"><Drop id="direction" value="One Side" Icon={SideIcon} /></Row>
        <Row label="Extent Type" id="extent"><Drop id="extent" value="Distance" Icon={DistanceIcon} /></Row>
        <Row label="Distance" id="distance"><Field id="distance" value="9.5 in" /></Row>
        <Row label="Taper Angle" id="taper"><Field id="taper" value="0.0 deg" /></Row>
        <hr className="-ml-4 mr-[19px] mt-[8px] mb-[5px] border-t-2 border-[#cfcfcf]" />
        <Row label="Operation" id="operation"><Drop id="operation" value="New Body" Icon={BodyNewIcon} /></Row>
      </div>
      <footer className="mt-[1px] flex h-[54px] items-center border-t-2 border-[#cdcdcd] pl-[9px] pr-[16px] text-[18px] text-[#777]">
        <button aria-label="Information" className="text-black"><MdInfo size={22} /></button>
        <button className="ml-auto h-7 w-[90px] border-2 border-[#c3c3c3] bg-[#e7e7e7] leading-none">OK</button>
        <button className="ml-[15px] h-7 w-[90px] border-2 border-[#c3c3c3] bg-[#e7e7e7] leading-none">Cancel</button>
      </footer>
    </section>
  );
}

/* ---------- navigation bar ---------- */

const NAV = [
  ["Orbit", true, <Svg w={24} h={30}><path d="M13 1l4 6h-2v22h-4V7H9z" fill="#eee" stroke="#555" strokeWidth="1.300" /><path d="M7 13q-6 1-6 4 1 4 12 4 10-1 10-4-1-4-6-4" stroke="#333" strokeWidth="2.200" /><path d="M2 22l7-4v8z" fill="#222" /></Svg>],
  ["Look at", false, <Svg w={26} h={30}><path d="M1 11h24v18H1z" fill="#fff" stroke="#555" strokeWidth="1.600" /><path d="M3 10l4-7 4 4 8-5v8" fill="#ddd" stroke="#555" strokeWidth="1.500" /><rect x="6" y="16" width="14" height="8" fill="#a9afbf" stroke="#444" strokeWidth="1.600" /></Svg>],
  ["Pan", false, <Svg w={26} h={30}><path d="M9 29Q5 23 1 17q1-3 4-1l3 3L5 5q2-3 4 0l3 10V2q2-2 4 0v12l3-10q3-1 3 2l-2 11 3-6q3 0 2 3l-4 10-3 5z" fill="#fff" stroke="#444" strokeWidth="1.500" strokeLinejoin="round" /></Svg>],
  ["Zoom", false, <Svg w={26} h={30}><circle cx="9" cy="12" r="8" fill="#dfeef2" stroke="#556" strokeWidth="1.600" /><path d="M14 18l6 9" stroke="#444" strokeWidth="4" /><path d="M22 1v8M18 5h8M19 13h7" stroke="#222" strokeWidth="1.600" /></Svg>],
  ["Fit", true, <Svg w={26} h={30}><rect x="2" y="1" width="22" height="28" stroke="#444" strokeWidth="1.500" strokeDasharray="3 3" /><circle cx="10" cy="11" r="10" fill="#d9eceb" stroke="#555" strokeWidth="1.600" /><path d="M16 20l8 9" stroke="#444" strokeWidth="5" /></Svg>],
  ["Display settings", true, <Svg w={26} h={30}><path d="M1 1h24v22H1z" fill="#f4f4f4" stroke="#555" strokeWidth="1.600" /><rect x="4" y="5" width="18" height="14" fill="#9dbce4" stroke="#3b5688" strokeWidth="1.600" /><path d="M9 24v2l-3 3h14l-3-3v-2" stroke="#555" strokeWidth="1.600" /></Svg>],
  ["Grid and snaps", true, <Svg w={26} h={30}><path d="M1 1h24v28H1zM6 1v28M11 1v28M16 1v28M21 1v28M1 6h24M1 10h24M1 15h24M1 20h24M1 25h24" fill="#fff" stroke="#666" strokeWidth="1.400" /></Svg>],
  ["Viewports", true, <Svg w={24} h={26}><g fill="#a9c4e8" stroke="#3b5688" strokeWidth="1.800"><rect x="1" y="1" width="10" height="11" /><rect x="13" y="1" width="10" height="11" /><rect x="1" y="14" width="10" height="11" /><rect x="13" y="14" width="10" height="11" /></g></Svg>],
];

function NavBar() {
  return (
    <nav className="flex h-9 items-center gap-[11px] bg-[#f1f1f1] px-[4px] text-[#333]">
      {NAV.map(([name, drop, icon]) => (
        <button key={name} aria-label={name} className="flex items-center gap-[4px]">
          {icon}
          {drop && <Caret />}
        </button>
      ))}
    </nav>
  );
}

function ValueBox() {
  return (
    <div className="flex h-[33px] w-[159px] items-center bg-[#f1f1f1] pl-[6px]">
      <span className="h-6 w-[9px] bg-[repeating-linear-gradient(0deg,#c8c8c8_0_1px,transparent_1px_3px)]" />
      <input aria-label="Extrude distance" defaultValue="9.5" className="ml-[5px] h-[31px] w-[104px] border-2 border-[#d5d5d5] bg-white text-center text-[16px] text-[#444] outline-none" />
      <button aria-label="More options" className="ml-[16px]">
        <Svg w={6} h={20}><path fill="#777" d="M1 1h4v4H1zM1 8h4v4H1zM1 15h4v4H1z" /></Svg>
      </button>
    </div>
  );
}

function Viewport() {
  return (
    <main className="relative flex min-h-[640px] flex-1 flex-col overflow-hidden bg-white pl-[6px] pr-[6px] pt-[9px] pb-[6px]">
      <Scene />
      <div className="relative flex flex-1 items-start">
        <Browser />
        <div className="flex flex-1 justify-end pr-[107px]">
          <ValueBox />
        </div>
        <div className="mt-[124px]">
          <ExtrudePanel />
        </div>
      </div>
      <div className="relative grid grid-cols-[450px_1fr_450px] items-center">
        <PanelHeader title="COMMENTS" plus />
        <div className="flex justify-center">
          <NavBar />
        </div>
        <p className="pr-[21px] text-right text-[17px] font-bold text-[#444]">1 Profile | Area : 4.14 in^2</p>
      </div>
    </main>
  );
}

/* ---------- timeline ---------- */

const PLAYBACK = [
  ["Go to start", "M1 0h3v22H1zM19 1v20L5 11z"],
  ["Step back", "M0 11L14 1v20zM15.500 6h3v10h-3z"],
  ["Play", "M1 0l18 11L1 22z"],
  ["Step forward", "M1 6h3v10H1zM5 1l15 10L5 21z"],
  ["Go to end", "M1 1l14 10L1 21zM16 0h3v22h-3z"],
];

function Timeline() {
  return (
    <div className="flex h-[74px] shrink-0 items-center border-t-2 border-[#dfdfdf] bg-[#f1f1f1] pl-[15px] pr-[20px]">
      <div className="flex gap-[17px] text-[#4a4a4a]">
        {PLAYBACK.map(([name, d]) => (
          <button key={name} aria-label={name}>
            <Svg w={20} h={22}><path d={d} fill="currentColor" /></Svg>
          </button>
        ))}
      </div>
      <button aria-label="Sketch feature" className="ml-[30px] mt-[2px]">
        <Svg w={48} h={50}>
          <path d="M20 38v9H8" stroke="#c6c6c6" strokeWidth="3" />
          <rect x="0" y="3" width="37" height="36" rx="2" fill="#0a98de" />
          <path d="M11 11h14M26 13v8M8 13v16M11 30h8" stroke="#555" strokeWidth="1.500" />
          <path d="M19 33l1-5 5-4 4 4-5 5z" fill="#f3c052" />
          <circle cx="28" cy="24" r="2.500" fill="#d9455f" />
          <path d="M27 0h18v8l-7 6h-4l-7-6zM35 13h3v36h-3z" fill="#666" />
        </Svg>
      </button>
      <button aria-label="Timeline settings" className="ml-auto">
        <FaCog size={24} color="#999" />
      </button>
    </div>
  );
}

/* ---------- taskbar ---------- */

function Chrome({ badge }) {
  return (
    <Svg w={40} h={40}>
      <circle cx="19" cy="18" r="18" fill="#34a24c" />
      <path d="M3.400 9A18 18 0 0 1 34.600 9H19z" fill="#e8392b" />
      <path d="M3.400 9L11 22.500 19 9z" fill="#e8392b" />
      <path d="M34.600 9A18 18 0 0 1 19 36l8-13.500L19 9z" fill="#fcc31e" />
      <circle cx="19" cy="18" r="8.500" fill="#fff" />
      <circle cx="19" cy="18" r="6.500" fill="#1e74e8" />
      {badge === "sky" ? (
        <>
          <circle cx="28" cy="27" r="12" fill="#24467a" />
          <path d="M17 31q5-4 10-1 7-4 12-1-3 10-11 10-7 0-11-8z" fill="#aab4c0" />
          <path d="M21 32q4-2 6 0l-2 4z" fill="#e6e9ee" />
        </>
      ) : (
        <>
          <circle cx="28" cy="27" r="12" fill="#8a7a62" />
          <path d="M18 21q10-12 20 0l-2 8H20z" fill="#5d4632" />
          <ellipse cx="28" cy="31" rx="7" ry="7" fill="#b9a88c" />
          <circle cx="24" cy="24" r="1.500" fill="#111" />
          <circle cx="32" cy="24" r="1.500" fill="#111" />
          <ellipse cx="28" cy="28" rx="2" ry="1.500" fill="#222" />
        </>
      )}
    </Svg>
  );
}

const FusionApp = () => (
  <Svg w={36} h={38}>
    <path d="M31 4l3 4v28h-3z" fill="#8a3400" />
    <path d="M6 0h22q3 0 3 3v24H6z" fill="#ff6b00" />
    <path d="M0 4l6-4v27l-6 3z" fill="#ff9550" />
    <path d="M4 27h30v11H4z" fill="#7d3103" />
    <text x="13" y="20" fontFamily="Liberation Sans" fontWeight="bold" fontSize="18" fill="#fff">F</text>
    <text x="19" y="36" fontFamily="Liberation Sans" fontWeight="bold" fontSize="8" fill="#fff" textAnchor="middle">360</text>
  </Svg>
);
const Explorer = () => (
  <Svg w={32} h={28}>
    <path d="M0 0h13l3 3H0z" fill="#e1a100" />
    <path d="M0 4h14l2-2h16v25H0z" fill="#ffd35c" />
    <path d="M6 28V17q0-2 2-2h16q2 0 2 2v11h-5v-7H11v7z" fill="#2f8fdc" />
  </Svg>
);
const Photos = () => (
  <Svg w={32} h={32}>
    <path d="M0 0h32v32H0z" fill="#27b0ee" />
    <path d="M20 0h12v32H20z" fill="#6fa4ec" opacity=".6" />
    <path d="M14 26l7-11 11 10v7H14z" fill="#3c62cf" />
    <path d="M0 20l10-9 19 21H0z" fill="#143f86" />
    <circle cx="21" cy="8" r="3.500" fill="#fff" />
  </Svg>
);

const APPS = [
  ["Google Chrome", <Chrome badge="sky" />, false, true],
  ["Spotify", <FaSpotify size={34} color="#1fd860" />, false, false],
  ["Fusion 360", <FusionApp />, true, false],
  ["Google Chrome, second profile", <Chrome badge="dog" />, false, false],
  ["File Explorer", <Explorer />, false, true],
  ["Photos", <Photos />, false, true],
];

function Taskbar() {
  return (
    <footer className={`flex h-[60px] shrink-0 bg-gradient-to-r from-[#1c1f24] via-[#202226] to-[#1c212b] text-white ${SEGOE}`}>
      <button aria-label="Start" className="flex w-[72px] shrink-0 items-center justify-center">
        <Svg w={24} h={24}><path fill="#fff" d="M0 3l10-1.500v10H0zM11.500 1.300L24 0v11.500H11.500zM0 12.700h10v9.800L0 21zM11.500 12.700H24V24l-12.500-1.600z" /></Svg>
      </button>
      <div className="flex w-[432px] shrink-0 items-center border-2 border-[#bcbcbc] bg-[#f1f1f1] pl-4">
        <Svg w={25} h={25}><circle cx="16" cy="8.500" r="7.500" stroke="#111" strokeWidth="1.800" /><path d="M11 14L1 24" stroke="#111" strokeWidth="1.800" /></Svg>
        <input aria-label="Search" placeholder="Type here to search" className="ml-[17px] mt-[3px] w-full bg-transparent text-[21px] text-[#222] outline-none placeholder:text-[#222]" />
      </div>
      <button aria-label="Task view" className="mr-[5px] flex w-[72px] shrink-0 items-center justify-center">
        <Svg w={24} h={24}>
          <path d="M1 0v3h15V0M1 24v-3h15v3M1 6.500h15v11H1zM22.500 0v6M22.500 12v12" stroke="#fff" strokeWidth="1.500" />
          <path d="M21 7h3v3h-3z" fill="#fff" />
        </Svg>
      </button>
      <div className="flex gap-[2px]">
        {APPS.map(([name, icon, active, stacked]) => (
          <button key={name} aria-label={name} className={`relative flex w-[73px] items-center justify-center ${active ? "bg-[#4b4d50]" : ""}`}>
            {icon}
            <span className={`absolute bottom-0 flex h-[3px] bg-[#76b9ed] ${active ? "inset-x-0" : "inset-x-[6px]"}`}>
              {stacked && <span className="ml-auto w-[13px] border-l border-[#223] bg-[#5a8fbd]" />}
            </span>
          </button>
        ))}
      </div>
      <div className="ml-auto flex items-center text-[17px]">
        <button className="flex w-[184px] items-center whitespace-nowrap text-[19px]">
          <span className="mr-[15px] h-[30px] w-[30px] shrink-0 rounded-full bg-gradient-to-br from-[#f3c236] to-[#f2660c]" />
          <span className="mt-[2px]">59°F</span>
          <span className="ml-3 mt-[2px]">Sunny</span>
        </button>
        <button aria-label="Show hidden icons" className="flex w-12 justify-center">
          <Svg w={18} h={10}><path d="M1 9l8-8 8 8" stroke="#fff" strokeWidth="1.500" /></Svg>
        </button>
        <button aria-label="Meet now" className="flex w-12 justify-center">
          <Svg w={17} h={22}><rect x="1" y="5" width="10" height="12" rx="2" stroke="#fff" strokeWidth="1.500" /><path d="M11 10l5-4v10l-5-4M3 2q5-2 10 0M3 20q5 2 10 0" stroke="#fff" strokeWidth="1.500" /></Svg>
        </button>
        <button aria-label="Battery" className="flex w-12 justify-center">
          <Svg w={24} h={18}><path d="M6 6h16v10H6z" fill="#fff" /><path d="M5 13v4h17V5H9M23.500 8v5M1 4h6v4q-3 3-6 0zM2 1v3M6 1v3M4 9v7h2" stroke="#fff" strokeWidth="1.300" /></Svg>
        </button>
        <button aria-label="OneDrive" className="flex w-12 justify-center">
          <Svg w={24} h={20}>
            <circle cx="12" cy="6" r="6" fill="#8b8f96" />
            <path d="M3 14q-4-4 0-7 5-4 8 1l5 1v5z" fill="#dcdfe3" />
            <circle cx="17" cy="13" r="7" fill="#ffe100" />
            <path d="M17 9v5M17 15.500v2" stroke="#111" strokeWidth="1.800" />
          </Svg>
        </button>
        <button aria-label="Windows Ink" className="flex w-[60px] justify-center">
          <Svg w={20} h={22}><path d="M7 15L15 2q2-2 3 0t-1 4L9 17l-3 1zM13 9q5-1 5 2-1 3-4 2M7 12q-6 1-6 5 0 3 3 3 3-1 4-3" stroke="#fff" strokeWidth="1.400" /></Svg>
        </button>
        <button className="w-[54px] text-center">ENG</button>
        <button className="w-[102px] text-center leading-7">
          <span className="block">9:04 PM</span>
          <span className="block">4/9/2023</span>
        </button>
        <button aria-label="Notifications" className="flex w-16 justify-center">
          <Svg w={24} h={24}>
            <path d="M0 0h24v18H15l-4 5v-5H0z" fill="#fff" />
            <path d="M5 5h14M5 9h14M5 13h8" stroke="#1d2129" strokeWidth="1.500" />
            <path d="M20 12q-1 6-7 7 3 5 8 3t3-7q-1-3-4-3z" fill="#fff" stroke="#1d2129" strokeWidth="1.200" />
          </Svg>
        </button>
        <span className="ml-[11px] mr-[6px] h-[60px] w-px bg-[#6a6d73]" />
      </div>
    </footer>
  );
}

export default function App() {
  return (
    <div className={`flex min-h-screen flex-col bg-white ${ARIAL}`}>
      <TitleBar />
      <TabBar />
      <Ribbon />
      <Viewport />
      <Timeline />
      <Taskbar />
    </div>
  );
}
